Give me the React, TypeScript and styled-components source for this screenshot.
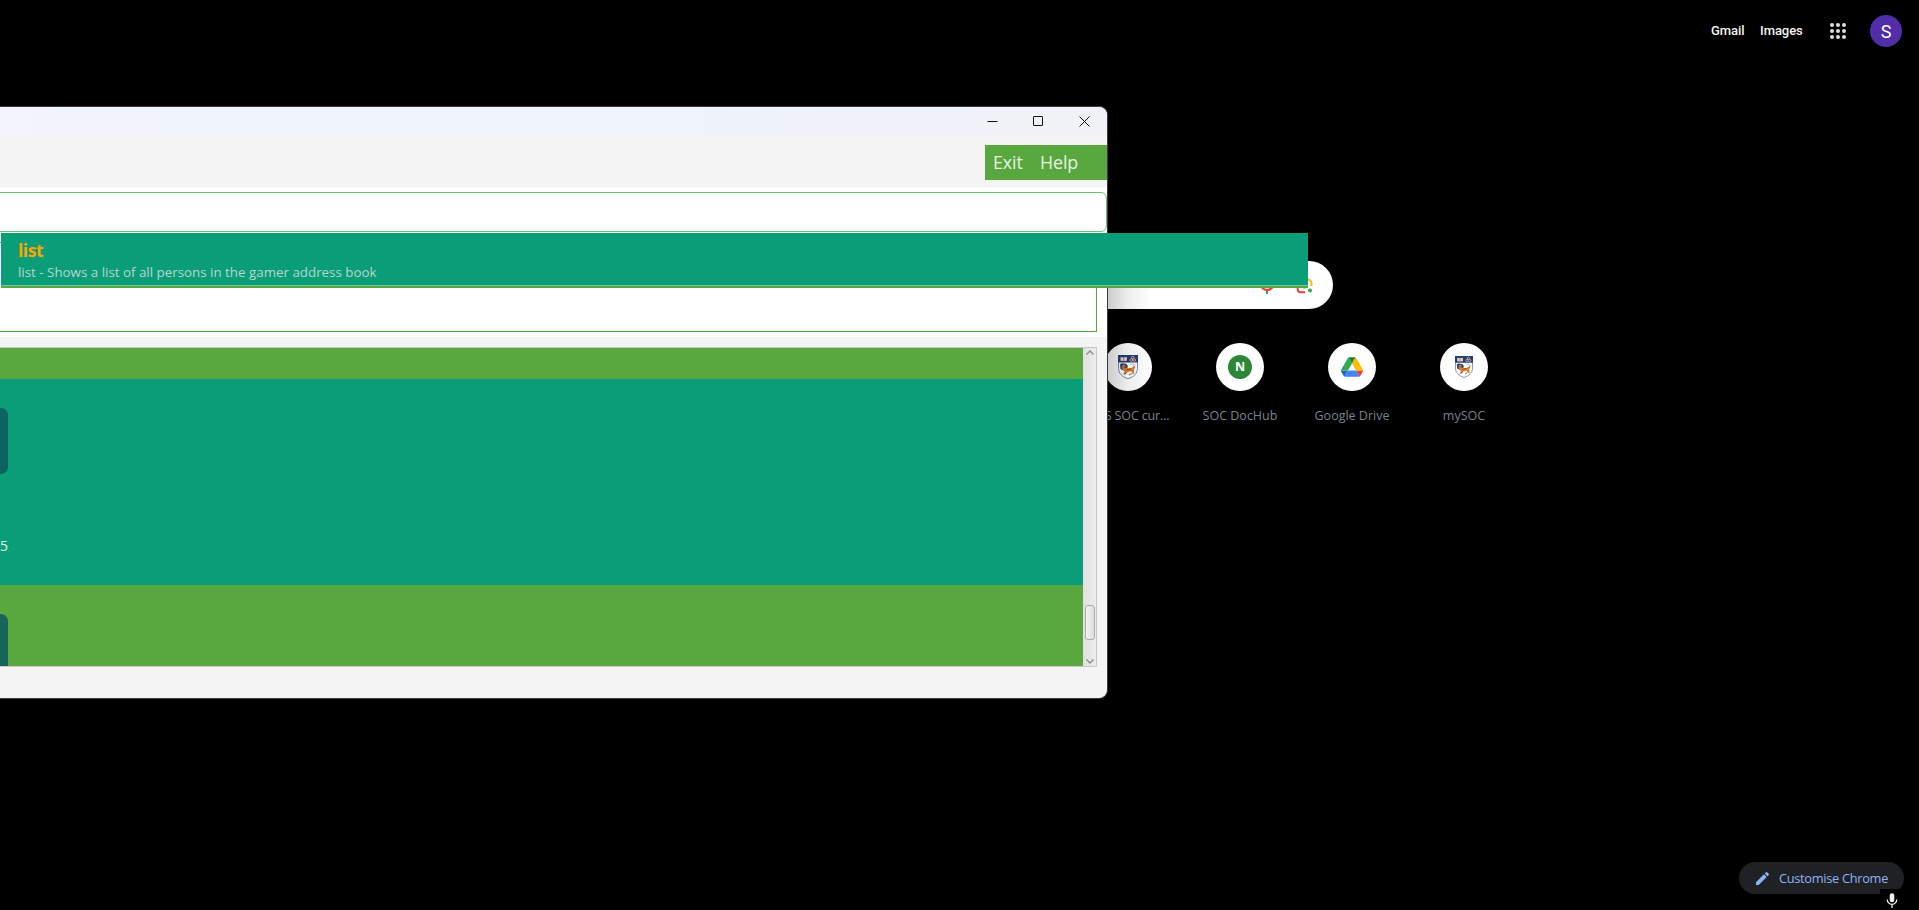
import React from 'react';
import styled, { createGlobalStyle } from 'styled-components';

const Global = createGlobalStyle`
  * { box-sizing: border-box; }
  html, body { margin: 0; background: #000; overflow: hidden; }
  body { font-family: "Open Sans", "Noto Sans", sans-serif; }
`;

const Page = styled.div`
  position: relative;
  width: 1919px;
  height: 910px;
  overflow: hidden;
  background: #000;
`;

/* Browser new tab page */
const TopBar = styled.header`
  display: flex;
  align-items: center;
  justify-content: flex-end;
  height: 61px;
  padding-right: 17px;
  font-family: Roboto, sans-serif;
`;
const TopLink = styled.a<{ $w: number; $gap: number }>`
  width: ${(p) => p.$w}px;
  margin-right: ${(p) => p.$gap}px;
  font-size: 13px;
  font-weight: 500;
  letter-spacing: -0.05px;
  color: #f4f4f4;
  white-space: nowrap;
`;
const Apps = styled.svg`
  width: 16px;
  height: 16px;
  margin-right: 24px;
  fill: #dedede;
`;
const Avatar = styled.div`
  width: 32px;
  height: 32px;
  border-radius: 50%;
  background: #512da8;
  color: #fff;
  font-size: 18px;
  line-height: 33px;
  font-weight: 400;
  text-align: center;
`;
const Search = styled.div`
  display: flex;
  align-items: center;
  justify-content: flex-end;
  gap: 15px;
  width: 747px;
  height: 48px;
  margin: 200px 0 0 586px;
  padding-right: 19px;
  border-radius: 24px;
  background: #fff;
`;
const Shortcuts = styled.div`
  display: flex;
  margin: 34px 0 0 1072px;
`;
const Shortcut = styled.div`
  display: flex;
  flex-direction: column;
  align-items: center;
  width: 112px;
`;
const Disc = styled.div`
  display: flex;
  align-items: center;
  justify-content: center;
  width: 48px;
  height: 48px;
  border-radius: 50%;
  background: #fff;
`;
const Label = styled.span<{ $ls?: number }>`
  margin-top: 15px;
  font-size: 12.5px;
  line-height: 19px;
  letter-spacing: ${(p) => p.$ls ?? 0}px;
  color: #76838d;
  white-space: nowrap;
`;
const Letter = styled.div`
  width: 24px;
  height: 24px;
  border-radius: 50%;
  background: #2c8737;
  color: #fff;
  font-size: 12.5px;
  font-weight: 700;
  line-height: 23px;
  text-align: center;
`;
const Customise = styled.button`
  position: absolute;
  right: 15px;
  bottom: 16px;
  display: flex;
  align-items: center;
  gap: 10px;
  width: 165px;
  height: 32px;
  padding: 0 0 0 17px;
  border: 0;
  border-radius: 16px;
  background: #202124;
  color: #8ab4f8;
  font: 12.8px "Open Sans", sans-serif;
  letter-spacing: -0.3px;
  white-space: nowrap;
`;
const MicTile = styled.div`
  position: absolute;
  right: 0;
  bottom: 0;
  display: flex;
  width: 39px;
  height: 21px;
  padding: 4px 0 0 6px;
  background: #000;
`;

/* Desktop application window */
const Window = styled.section`
  position: absolute;
  left: -8px;
  top: 106px;
  display: flex;
  flex-direction: column;
  width: 1116px;
  height: 593px;
  border: 1px solid #39393b;
  border-left: 0;
  border-radius: 0 9px 9px 0;
  background: #f4f4f4;
  overflow: hidden;
`;
const WindowShadow = styled.div`
  position: absolute;
  left: 1108px;
  top: 240px;
  width: 44px;
  height: 160px;
  background: linear-gradient(90deg, rgba(0,0,0,.2), rgba(0,0,0,.07) 45%, transparent);
`;
const TitleBar = styled.div`
  display: flex;
  flex: none;
  justify-content: flex-end;
  gap: 35px;
  height: 30px;
  padding: 8px 17px 0 0;
  background: linear-gradient(90deg, #f3f4fc, #eff3fc 20%, #eff3fc 60%, #f1f2f8);
`;
const Control = styled.svg`
  width: 11px;
  height: 12px;
  fill: none;
  stroke: #111;
`;
const MenuRow = styled.div`
  display: flex;
  flex: none;
  justify-content: flex-end;
  height: 50px;
  padding-top: 8px;
`;
const Menu = styled.nav`
  display: flex;
  width: 122px;
  height: 35px;
  padding-left: 8px;
  background: #58a83f;
  color: #e6f2e2;
  font: 17.8px/34px "Open Sans", sans-serif;
`;
const MenuItem = styled.span<{ $w: number }>`
  width: ${(p) => p.$w}px;
  letter-spacing: -0.1px;
`;
const Fields = styled.div`
  display: flex;
  flex: none;
  flex-direction: column;
  gap: 10px;
  height: 150px;
  padding-top: 5px;
  background: #fff;
`;
const CommandBox = styled.div`
  height: 40px;
  border: 1px solid #70c073;
  border-radius: 6px;
`;
const ResultBox = styled.div`
  height: 90px;
  margin-right: 10px;
  border: 1px solid #58a83f;
`;
const ListPane = styled.div`
  display: flex;
  flex: none;
  height: 320px;
  margin: 10px 10px 0 8px;
  border: 1px solid #c8c8c8;
  border-left: 0;
`;
const Rows = styled.div`
  display: flex;
  flex: 1;
  flex-direction: column;
  overflow: hidden;
`;
const Row = styled.div<{ $h: number; $alt?: boolean }>`
  flex: none;
  height: ${(p) => p.$h}px;
  padding-top: 29px;
  overflow: hidden;
  background: ${(p) => (p.$alt ? '#0a9e78' : '#58a83f')};
`;
const Tag = styled.div<{ $c: string }>`
  width: 8px;
  height: 66px;
  border-radius: 0 7px 7px 0;
  background: ${(p) => p.$c};
`;
const Detail = styled.div`
  margin-top: 62px;
  font-size: 14px;
  line-height: 20px;
  color: #e0f2ed;
`;
const Scrollbar = styled.div`
  display: flex;
  flex-direction: column;
  align-items: center;
  width: 13px;
  padding: 2px 0 2px 1px;
  background: linear-gradient(90deg, #e0e0e0, #ededed);
`;
const Arrow = styled.svg`
  flex: none;
  width: 8px;
  height: 5px;
  fill: none;
  stroke: #8b8b8b;
  stroke-width: 1.3;
`;
const Thumb = styled.div`
  flex: none;
  width: 10px;
  height: 35px;
  margin: 250px 0 19px;
  border: 1px solid #ababab;
  border-radius: 3px;
  background: linear-gradient(90deg, #f4f4f4, #dcdcdc);
`;
const Popup = styled.div`
  position: absolute;
  left: 1px;
  top: 233px;
  width: 1307px;
  height: 55px;
  padding: 6px 17px 0;
  background: #0a9e78;
  border-bottom: 2px solid #58a83f;
  box-shadow: inset 0 -1px #6cc7ae;
`;
const Suggestion = styled.div`
  font-size: 17.3px;
  line-height: 23px;
  font-weight: 700;
  letter-spacing: -0.4px;
  color: #ffa500;
`;
const Hint = styled.div`
  margin-top: 1px;
  font-size: 13.35px;
  line-height: 18px;
  color: #bad4ce;
  white-space: nowrap;
`;

const Crest = ({ size }: { size: number }) => (
  <svg width={size} height={size * 1.22} viewBox="0 0 20 24.4">
    <path d="M.5.5h19v13c0 5-4 8.500-9.500 10.400C4.500 22 .5 18.500.5 13.500z" fill="#fff" stroke="#7189b5" />
    <path d="M0 0h20v7.500H0z" fill="#213f7d" />
    <path d="M2.500 2l3 .4L8.800 2v3.700l-3.300.4-3-.4z" fill="#f0d5bf" />
    <path d="M5.600 2v4" stroke="#8a6c66" strokeWidth=".7" />
    <g fill="none" stroke="#e6b088" strokeWidth=".9">
      <circle cx="14.800" cy="2.600" r="1.300" />
      <circle cx="13.300" cy="5" r="1.300" />
      <circle cx="16.300" cy="5" r="1.300" />
    </g>
    <path d="M2 9.300l2-1 4 .5 1.800 2-.6 3.200-3 1.700L2.500 14z" fill="#264273" />
    <path d="M4 10.500l2-1 1.500 1.300-.5 1.800 2.500.9 4.500-.8 2.300-2.200 1 1.800-1.500 2 .5 4-1.700.8-1-2.800-3.800.5-2 2.500-2.600.3 1.500-3-2.300-2z" fill="#d97c2b" />
    <path d="M6 19l2-1m3 2l3-1.500M9 14.500l4-.5M5 11.500l2 1" stroke="#754326" strokeWidth=".8" />
    <path d="M12 9l4.500.3 1 1.500" stroke="#bfc8dc" fill="none" />
  </svg>
);

const Drive = () => (
  <svg width="22" height="20" viewBox="0 0 87.300 78">
    <path d="M6.600 66.850l3.850 6.650c.8 1.400 1.950 2.500 3.300 3.300L27.500 53H0c0 1.550.4 3.100 1.200 4.500z" fill="#1967d2" />
    <path d="M43.650 25L29.900 1.200c-1.350.8-2.500 1.900-3.300 3.300L1.200 48.500A9 9 0 000 53h27.500z" fill="#34a853" />
    <path d="M73.550 76.800c1.350-.8 2.500-1.900 3.300-3.300l9.250-16c.8-1.400 1.200-2.950 1.200-4.500H59.800l5.850 11.500z" fill="#ea4335" />
    <path d="M43.650 25L57.400 1.200C56.050.4 54.500 0 52.900 0H34.400c-1.600 0-3.150.45-4.500 1.200z" fill="#188038" />
    <path d="M59.800 53H27.500L13.750 76.800c1.350.8 2.900 1.200 4.500 1.200h50.800c1.600 0 3.150-.45 4.500-1.200z" fill="#4285f4" />
    <path d="M73.400 26.500L60.700 4.500c-.8-1.400-1.950-2.500-3.300-3.300L43.650 25 59.800 53h27.450c0-1.550-.4-3.100-1.200-4.500z" fill="#fbbc04" />
  </svg>
);

export default function App() {
  return (
    <Page>
      <Global />
      <TopBar>
        <TopLink $w={35} $gap={14}>Gmail</TopLink>
        <TopLink $w={43} $gap={27}>Images</TopLink>
        <Apps viewBox="0 0 16 16">
          {[2, 8, 14].map((y) => [2, 8, 14].map((x) => <circle key={`${x}-${y}`} cx={x} cy={y} r="2" />))}
        </Apps>
        <Avatar>S</Avatar>
      </TopBar>

      <Search>
        <svg width="24" height="24" viewBox="0 1 24 24">
          <path d="M12 16a3 3 0 003-3V5a3 3 0 00-6 0v8a3 3 0 003 3z" fill="#4285f4" />
          <path d="M11 18h2v4h-2z" fill="#34a853" />
          <path d="M7 12H5c0 1.900.8 3.600 2 4.900l1.500-1.400A5 5 0 017 12z" fill="#fbbc04" />
          <path d="M12 17a5 5 0 01-4.300-2.500L6.200 16A7 7 0 0019 12h-2a5 5 0 01-5 5z" fill="#ea4335" />
        </svg>
        <svg width="20" height="20" viewBox="0 0 20 20" fill="none" strokeWidth="2">
          <path d="M3.700 12v2.200a3 3 0 003 3H11" stroke="#ea4335" />
          <path d="M3.700 8V6a4 4 0 014-4h2" stroke="#ea4335" />
          <path d="M12 4.500h1.500a4 4 0 014 4V11" stroke="#fbbc04" />
          <circle cx="10.500" cy="10.300" r="3.300" fill="#4285f4" />
          <circle cx="16" cy="15.600" r="2" fill="#34a853" />
        </svg>
      </Search>
      <Shortcuts>
        <Shortcut><Disc><Crest size={20} /></Disc><Label $ls={-0.15}>NUS SOC cur...</Label></Shortcut>
        <Shortcut><Disc><Letter>N</Letter></Disc><Label>SOC DocHub</Label></Shortcut>
        <Shortcut><Disc><Drive /></Disc><Label>Google Drive</Label></Shortcut>
        <Shortcut><Disc><Crest size={18} /></Disc><Label>mySOC</Label></Shortcut>
      </Shortcuts>
      <WindowShadow />

      <Window>
        <TitleBar>
          <Control viewBox="0 0 11 12"><path d="M.5 6.500h10" /></Control>
          <Control viewBox="0 0 11 12"><rect x=".5" y="1.500" width="9" height="9" rx=".5" /></Control>
          <Control viewBox="0 0 11 12"><path d="M.5 1.500l10 10M10.500 1.500l-10 10" /></Control>
        </TitleBar>
        <MenuRow>
          <Menu>
            <MenuItem $w={47}>Exit</MenuItem>
            <MenuItem $w={45}>Help</MenuItem>
          </Menu>
        </MenuRow>
        <Fields>
          <CommandBox />
          <ResultBox />
        </Fields>
        <ListPane>
          <Rows>
            <Row $h={31} />
            <Row $h={206} $alt>
              <Tag $c="#0d645e" />
              <Detail>5</Detail>
            </Row>
            <Row $h={81}><Tag $c="#176459" /></Row>
          </Rows>
          <Scrollbar>
            <Arrow viewBox="0 0 8 5"><path d="M.5 4.500L4 1l3.500 3.500" /></Arrow>
            <Thumb />
            <Arrow viewBox="0 0 8 5"><path d="M.5.500L4 4 7.500.500" /></Arrow>
          </Scrollbar>
        </ListPane>
      </Window>

      <Popup>
        <Suggestion>list</Suggestion>
        <Hint>list - Shows a list of all persons in the gamer address book</Hint>
      </Popup>

      <Customise>
        <svg width="13" height="13" viewBox="3 3 18 18" fill="#8ab4f8">
          <path d="M3 17.250V21h3.750L17.810 9.940l-3.750-3.750L3 17.250zM20.710 7.040a1 1 0 000-1.410l-2.340-2.340a1 1 0 00-1.410 0l-1.830 1.830 3.750 3.750 1.830-1.830z" />
        </svg>
        Customise Chrome
      </Customise>
      <MicTile>
        <svg width="12" height="15" viewBox="0 0 12 15" fill="none">
          <rect x="3.700" y=".3" width="4.600" height="9" rx="2.300" fill="#eee" />
          <path d="M1.200 6.500a4.800 4.800 0 009.600 0M6 11.500V15" stroke="#eee" strokeWidth="1.300" />
        </svg>
      </MicTile>
    </Page>
  );
}
